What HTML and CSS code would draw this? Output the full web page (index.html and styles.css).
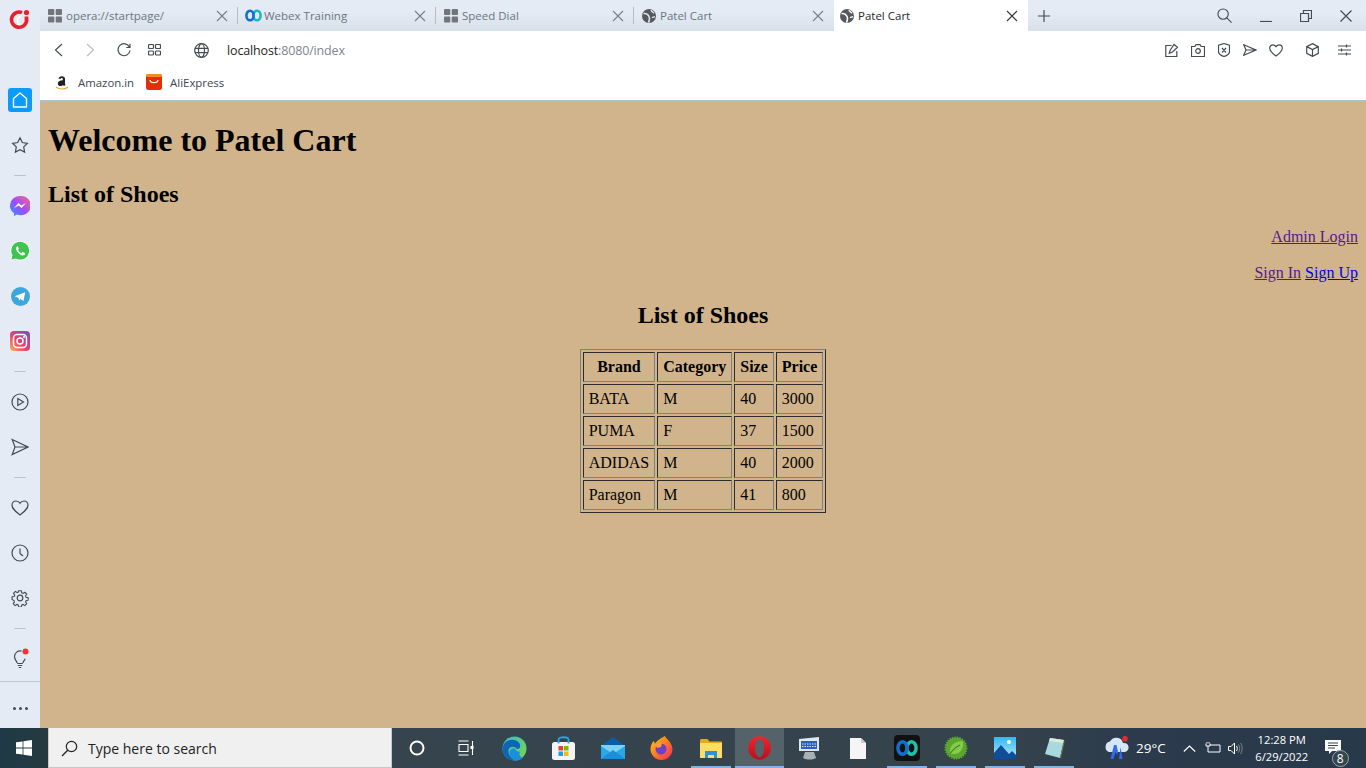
FILE: index.html
```html
<!DOCTYPE html>
<html>
<head>
    <title>Patel Cart</title>
    <link rel="stylesheet" href="styles.css">
</head>
<body>
<div class="window">
    <div class="main">
        <!-- opera sidebar -->
        <div class="sidebar">
            <div class="side-logo">
                <svg width="22" height="22" viewBox="0 0 22 22"><path d="M13 4.600A7.600 7.600 0 1 0 17.700 12" fill="none" stroke="#e8202e" stroke-width="3.600"/><path d="M11.500 8.500c-2 .6-3 2.600-3 4.600 0 2 .8 3.400 2 4" fill="none" stroke="#fff" stroke-width="1.500"/><circle cx="17.500" cy="4.500" r="2.600" fill="#e8202e"/><rect x="15.600" y="8.500" width="3.800" height="4" fill="#e8202e"/></svg>
            </div>
            <div class="side-item">
                <span class="home-btn"><svg width="18" height="18" viewBox="0 0 18 18"><path d="M2.500 16V7.500L9 2l6.500 5.500V16z" fill="none" stroke="#fff" stroke-width="1.400" stroke-linejoin="round"/></svg></span>
            </div>
            <div class="side-item"><svg class="ico" width="18" height="18" viewBox="0 0 18 18"><path d="M9 1.800l2.300 4.700 5.100.8-3.700 3.600.9 5.200L9 13.600l-4.600 2.500.9-5.200-3.700-3.600 5.100-.8z"/></svg></div>
            <div class="side-sep"></div>
            <div class="side-item"><svg width="20" height="20" viewBox="0 0 20 20"><defs><linearGradient id="msg" x1="0" y1="1" x2="1" y2="0"><stop offset="0" stop-color="#2a9cff"/><stop offset=".45" stop-color="#9a4dff"/><stop offset="1" stop-color="#ff6583"/></linearGradient></defs><path d="M10 0a10 9.600 0 0 0-6 17.200V20l3-1.600a10 9.600 0 1 0 3-18.400z" fill="url(#msg)"/><path d="M4 12l4.500-5 2.700 2.500L16 7l-4.500 5-2.700-2.500z" fill="#fff"/></svg></div>
            <div class="side-item"><svg width="20" height="20" viewBox="0 0 20 20"><path d="M.6 19.400l1.400-5A9.400 9.400 0 1 1 5.700 18z" fill="#3fc351" stroke="#fff" stroke-width="1"/><path d="M7.300 5.400c-1.200.6-1.700 2-1 3.700 1 2.300 3 4.300 5.200 5.100 1.600.5 3 0 3.500-1.300.2-.5 0-.8-.3-1l-1.700-.8c-.3-.1-.6 0-.8.3l-.6.800c-1.500-.5-2.800-1.700-3.500-3.300l.6-.7c.2-.2.2-.5.100-.8l-.7-1.700c-.1-.3-.4-.4-1-.3z" fill="#fff"/></svg></div>
            <div class="side-item"><svg width="19" height="19" viewBox="0 0 19 19"><circle cx="9.500" cy="9.500" r="9.500" fill="#3ea6de"/><path d="M3.800 9.300l10.400-4.100-1.700 8.900-3-2.100-1.500 1.500-.4-2.500z" fill="#fff"/></svg></div>
            <div class="side-item"><svg width="20" height="20" viewBox="0 0 20 20"><defs><linearGradient id="ig" x1="0" y1="1" x2="1" y2="0"><stop offset="0" stop-color="#fdb44b"/><stop offset=".45" stop-color="#e8416f"/><stop offset="1" stop-color="#6a50c8"/></linearGradient></defs><rect width="20" height="20" rx="4" fill="url(#ig)"/><rect x="3.500" y="3.500" width="13" height="13" rx="3.500" fill="none" stroke="#fff" stroke-width="1.500"/><circle cx="10" cy="10" r="3" fill="none" stroke="#fff" stroke-width="1.500"/><circle cx="14" cy="6" r="1" fill="#fff"/></svg></div>
            <div class="side-sep"></div>
            <div class="side-item"><svg class="ico" width="18" height="18" viewBox="0 0 18 18"><circle cx="9" cy="9" r="8"/><path d="M6.800 5.500L12.500 9l-5.700 3.500z"/></svg></div>
            <div class="side-item"><svg class="ico" width="18" height="18" viewBox="0 0 18 18"><path d="M1.200 1.500L17 9 1.200 16.500 4 9zM4 9h13"/></svg></div>
            <div class="side-sep"></div>
            <div class="side-item"><svg class="ico" width="18" height="16" viewBox="0 0 18 16"><path d="M9 15C4 11 1 8.500 1 5.200 1 2.800 2.800 1 5 1c1.700 0 3.100.9 4 2.300C9.900 1.900 11.300 1 13 1c2.200 0 4 1.800 4 4.200C17 8.500 14 11 9 15z"/></svg></div>
            <div class="side-item"><svg class="ico" width="18" height="18" viewBox="0 0 18 18"><circle cx="9" cy="9" r="8"/><path d="M9 4.500V9.500l3 2.500"/></svg></div>
            <div class="side-item"><svg class="ico" width="18" height="18" viewBox="0 0 18 18"><circle cx="9" cy="9" r="2.800"/><path d="M7.500 1h3l.4 2.300 1.500.7 2-1.300 2 2.100-1.300 2 .6 1.500 2.300.4v2.700l-2.300.5-.6 1.400 1.300 2-2 2.100-2-1.300-1.500.6-.4 2.300h-3l-.4-2.300-1.500-.6-2 1.300-2-2.100 1.300-2-.6-1.400L.3 10.500V7.700l2.300-.4.6-1.500-1.300-2 2-2.100 2 1.300 1.500-.7z" transform="translate(.8 .8) scale(.91)"/></svg></div>
            <div class="side-sep"></div>
            <div class="side-item">
                <svg class="ico" width="18" height="22" viewBox="0 0 18 22"><path d="M6 15c0-2-2.500-3-2.500-6.500a5.500 5.500 0 0 1 7-5.300M12 15c0-1.500 1.500-2.500 2.200-4.200M6.200 15.500h5.600M6.800 17.500h4.400M7.800 19.500h2.400"/><circle class="red-dot" cx="14.500" cy="3.500" r="3"/></svg>
            </div>
            <div class="side-more"><span></span><span></span><span></span></div>
        </div>

        <div class="browser">
            <div class="tabs">
                <div class="tab">
                    <svg class="tab-ico" width="14" height="14" viewBox="0 0 14 14"><rect width="6.300" height="6" rx="1"/><rect x="7.700" width="6.300" height="6" rx="1"/><rect y="7.500" width="6.300" height="6" rx="1"/><rect x="7.700" y="7.500" width="6.300" height="6" rx="1"/></svg>
                    <span class="tab-title">opera://startpage/</span>
                    <svg class="tab-x" width="12" height="12" viewBox="0 0 12 12"><path d="M1 1l10 10M11 1L1 11"/></svg>
                </div>
                <div class="tab tab-webex">
                    <svg width="17" height="13" viewBox="0 0 17 13"><ellipse cx="12" cy="6.500" rx="3.600" ry="4.800" fill="none" stroke="#1fb4c6" stroke-width="2.600"/><ellipse cx="5" cy="6.500" rx="3.600" ry="4.800" fill="none" stroke="#1170cf" stroke-width="2.600"/></svg>
                    <span class="tab-title">Webex Training</span>
                    <svg class="tab-x" width="12" height="12" viewBox="0 0 12 12"><path d="M1 1l10 10M11 1L1 11"/></svg>
                </div>
                <div class="tab">
                    <svg class="tab-ico" width="14" height="14" viewBox="0 0 14 14"><rect width="6.300" height="6" rx="1"/><rect x="7.700" width="6.300" height="6" rx="1"/><rect y="7.500" width="6.300" height="6" rx="1"/><rect x="7.700" y="7.500" width="6.300" height="6" rx="1"/></svg>
                    <span class="tab-title">Speed Dial</span>
                    <svg class="tab-x" width="12" height="12" viewBox="0 0 12 12"><path d="M1 1l10 10M11 1L1 11"/></svg>
                </div>
                <div class="tab tab-last">
                    <svg class="tab-ico" width="14" height="14" viewBox="0 0 14 14"><circle cx="7" cy="7" r="7"/><path class="tab-gl" d="M1.500 4.600C4 4.200 6 5.600 7 7.300s.6 3.800-.5 6.300M8.800 1.200l3.200 3M10 8.600l3-1"/></svg>
                    <span class="tab-title">Patel Cart</span>
                    <svg class="tab-x" width="12" height="12" viewBox="0 0 12 12"><path d="M1 1l10 10M11 1L1 11"/></svg>
                </div>
                <div class="tab tab-active">
                    <svg class="tab-ico" width="14" height="14" viewBox="0 0 14 14"><circle cx="7" cy="7" r="7"/><path class="tab-gl" d="M1.500 4.600C4 4.200 6 5.600 7 7.300s.6 3.800-.5 6.300M8.800 1.200l3.200 3M10 8.600l3-1"/></svg>
                    <span class="tab-title">Patel Cart</span>
                    <svg class="tab-x" width="12" height="12" viewBox="0 0 12 12"><path d="M1 1l10 10M11 1L1 11"/></svg>
                </div>
                <svg class="tab-plus ico" width="12" height="12" viewBox="0 0 12 12"><path d="M6 0v12M0 6h12"/></svg>
                <div class="win-btns">
                    <svg class="ico" width="15" height="15" viewBox="0 0 16 16"><circle cx="6.500" cy="6.500" r="5.500"/><path d="M10.500 10.500L15.500 15.500"/></svg>
                    <svg class="ico" width="12" height="12" viewBox="0 0 12 12"><path d="M0 11.500h12"/></svg>
                    <svg class="ico" width="12" height="12" viewBox="0 0 12 12"><path d="M.5 3.500h8v8h-8zM3.500 3.500v-3h8v8h-3"/></svg>
                    <svg class="ico" width="12" height="12" viewBox="0 0 12 12"><path d="M.5.500l11 11M11.500.500l-11 11"/></svg>
                </div>
            </div>

            <div class="toolbar">
                <svg class="ico" width="9" height="14" viewBox="0 0 9 14"><path d="M8 1L1.500 7 8 13"/></svg>
                <svg class="ico ico-off nav-fwd" width="9" height="14" viewBox="0 0 9 14"><path d="M1 1l6.500 6L1 13"/></svg>
                <svg class="ico nav-reload" width="14" height="14" viewBox="0 0 14 14"><path d="M12.500 4.200A6 6 0 1 0 13 7.500M13 .8v3.700H9.300"/></svg>
                <svg class="ico nav-grid" width="13" height="12" viewBox="0 0 13 12"><rect x=".5" y=".5" width="5" height="4" rx="1"/><rect x="7.500" y=".5" width="5" height="4" rx="1"/><rect x=".5" y="7" width="5" height="4" rx="1"/><rect x="7.500" y="7" width="5" height="4" rx="1"/></svg>
                <svg class="ico globe" width="15" height="15" viewBox="0 0 15 15"><circle cx="7.500" cy="7.500" r="6.800"/><ellipse cx="7.500" cy="7.500" rx="3" ry="6.800"/><path d="M1 5.300h13M1 9.700h13"/></svg>
                <div class="url">localhost<span class="url-dim">:8080/index</span></div>
                <div class="tool-right">
                    <svg class="ico" width="14" height="14" viewBox="0 0 14 14"><path d="M6.500 2.500H.8v11h11V8M5 7.500L9 1.500l3.500 2.800L7.500 9l-3.200 1.300z"/></svg>
                    <svg class="ico" width="14" height="13" viewBox="0 0 14 13"><path d="M.5 2.500h3.300L5 .7h4l1.200 1.800h3.300v10H.5z"/><circle cx="7" cy="7" r="2.300"/></svg>
                    <svg class="ico" width="12" height="14" viewBox="0 0 12 14"><path d="M6 .5l5.500 1.800v6.200c0 2.500-3 4.200-5.500 5-2.500-.8-5.500-2.500-5.500-5V2.300zM4 5l4 4.500M8 5L4 9.500"/></svg>
                    <svg class="ico" width="14" height="12" viewBox="0 0 14 12"><path d="M.8.800L13 6 .8 11.200 3 6zM3 6h10"/></svg>
                    <svg class="ico" width="14" height="13" viewBox="0 0 14 13"><path d="M7 12C3 9 .7 7 .7 4.200.7 2.200 2.200.8 3.900.8 5.200.8 6.300 1.500 7 2.600 7.700 1.500 8.800.8 10.100.8c1.700 0 3.200 1.400 3.200 3.400C13.300 7 11 9 7 12z"/></svg>
                    <svg class="ico ico-gap" width="13" height="14" viewBox="0 0 13 14"><path d="M6.500.6l5.800 3v6.800l-5.800 3-5.800-3V3.600zM.7 3.600l5.800 3 5.800-3M6.500 6.600v6.800"/></svg>
                    <svg class="ico ico-gap2" width="13" height="12" viewBox="0 0 13 12"><path d="M0 2h13M0 6h13M0 10h13M8.500.5v3M3.500 4.500v3M8.500 8.500v3"/></svg>
                </div>
            </div>

            <div class="bookmarks">
                <div class="bookmark">
                    <svg width="14" height="15" viewBox="0 0 14 15"><path d="M3.500 3.700c.2-1.600 1.600-2.500 3.300-2.500 2 0 3.200 1 3.200 2.600v4.700c0 .6.300.9.600 1.200L9 11c-.5-.4-.7-.7-.9-1-.8.800-1.500 1.100-2.600 1.100-1.500 0-2.700-1-2.700-2.600 0-2.100 1.900-3 5-3.200v-1.200c0-.7-.4-1.200-1.100-1.200-.6 0-1.100.3-1.200 1z" fill="#222"/><path d="M1 12c3.500 2.300 8.500 2.300 12 .2" fill="none" stroke="#f5a623" stroke-width="1.200"/></svg>
                    <span>Amazon.in</span>
                </div>
                <div class="bookmark bookmark-ali">
                    <svg width="16" height="16" viewBox="0 0 16 16"><rect width="16" height="16" rx="2.500" fill="#e62e04"/><rect width="16" height="3" rx="1.500" fill="#f58a1f"/><path d="M4 6c.5 3.500 7.500 3.500 8 0" fill="none" stroke="#fff" stroke-width="1.300"/></svg>
                    <span>AliExpress</span>
                </div>
            </div>

            <div class="page">
                <h1>Welcome to Patel Cart</h1>
                <h2>List of Shoes</h2>
                <p class="links"><a class="seen" href="#">Admin Login</a></p>
                <p class="links"><a class="seen" href="#">Sign In</a> <a href="#">Sign Up</a></p>
                <h2 class="center">List of Shoes</h2>
                <table class="shoes">
                    <tr><th>Brand</th><th>Category</th><th>Size</th><th>Price</th></tr>
                    <tr><td>BATA</td><td>M</td><td>40</td><td>3000</td></tr>
                    <tr><td>PUMA</td><td>F</td><td>37</td><td>1500</td></tr>
                    <tr><td>ADIDAS</td><td>M</td><td>40</td><td>2000</td></tr>
                    <tr><td>Paragon</td><td>M</td><td>41</td><td>800</td></tr>
                </table>
            </div>
        </div>
    </div>

    <!-- windows taskbar -->
    <div class="taskbar">
        <div class="start">
            <svg width="16" height="16" viewBox="0 0 16 16"><path d="M0 2.300l6.600-.9v6.200H0zM7.400 1.300L16 0v7.600H7.400zM0 8.400h6.600v6.200L0 13.700zM7.400 8.400H16V16l-8.600-1.300z" fill="#fff"/></svg>
        </div>
        <div class="search">
            <svg width="17" height="17" viewBox="0 0 17 17"><circle cx="10.500" cy="6.500" r="5.200" fill="none" stroke="#222" stroke-width="1.200"/><path d="M6.700 10.300L1 16" stroke="#222" stroke-width="1.300"/></svg>
            <span>Type here to search</span>
        </div>
        <div class="tb-icons">
            <div class="tb-item"><svg width="16" height="16" viewBox="0 0 16 16"><circle cx="8" cy="8" r="6.500" fill="none" stroke="#fff" stroke-width="2"/></svg></div>
            <div class="tb-item"><svg width="16" height="16" viewBox="0 0 16 16"><path d="M.5 1h10M.5 15h10M1 4.500h9v7H1zM14.500 1v14" fill="none" stroke="#fff" stroke-width="1.100"/><rect x="12.500" y="6" width="3" height="3" fill="#fff"/></svg></div>
            <div class="tb-item"><svg width="25" height="25" viewBox="0 0 25 25"><defs><linearGradient id="edge1" x1="0" y1="0" x2="1" y2="1"><stop offset="0" stop-color="#35c1c9"/><stop offset="1" stop-color="#7ed44a"/></linearGradient></defs><circle cx="12.500" cy="12.500" r="12" fill="url(#edge1)"/><path d="M.5 12.500C1.500 5 8 3 12 4c5 1 7.500 5 5.500 8-1 1.500-3.500 1-4-.5C11 10 7 11 6.500 14c-.5 4 3 9 7 10.500C6.500 25.500.5 19.500.5 12.500z" fill="#0c66b5"/><path d="M13 24.500c-3-1-6-5-5.500-9 .5-2.500 3.500-4 5.500-3 .5 2 2 3.500 5 3.200-1.500 3 .5 5.500 3 6-2 2-5 3-8 2.800z" fill="#1b8fdc"/></svg></div>
            <div class="tb-item"><svg width="23" height="24" viewBox="0 0 23 24"><rect y="6" width="23" height="18" rx="2.500" fill="#f4f4f4"/><path d="M6.500 7.500V3.500c0-3 10-3 10 0v4" fill="none" stroke="#26a7e0" stroke-width="1.800"/><rect x="6.500" y="10" width="4.500" height="4.500" fill="#e8432a"/><rect x="12" y="10" width="4.500" height="4.500" fill="#7fb900"/><rect x="6.500" y="15.500" width="4.500" height="4.500" fill="#0ea5e9"/><rect x="12" y="15.500" width="4.500" height="4.500" fill="#fdb900"/></svg></div>
            <div class="tb-item"><svg width="24" height="22" viewBox="0 0 24 22"><path d="M0 9L12 0l12 9v13H0z" fill="#0a5ea8"/><path d="M0 9h24v13H0z" fill="#28a8ea"/><path d="M0 9l12 8 12-8v-1H0z" fill="#7dd3f7"/><path d="M0 22l12-9 12 9z" fill="#1b8fdc"/></svg></div>
            <div class="tb-item"><svg width="23" height="24" viewBox="0 0 23 24"><defs><linearGradient id="ff" x1="0" y1="0" x2="1" y2="1"><stop offset="0" stop-color="#ffcb1f"/><stop offset=".5" stop-color="#ff7a20"/><stop offset="1" stop-color="#f0276c"/></linearGradient></defs><path d="M15 0c1 3 7 6 7.500 13a11 11 0 0 1-22 0C.5 9 2.500 6 4 5l1 3c1-3 5-5 10-8z" fill="url(#ff)"/><circle cx="11" cy="13" r="5.500" fill="#6e3fc9"/><path d="M5 8c2-2 5-2 7-1l-1 4-4 1z" fill="#ff9d2a"/></svg></div>
            <div class="tb-item tb-run"><svg width="22" height="19" viewBox="0 0 22 19"><path d="M0 1.500C0 .700.700 0 1.500 0h6l2 2.500H22V19H0z" fill="#e5a81f"/><rect y="4" width="22" height="15" fill="#fddc68"/><path d="M5 12h12v7H14v-3H8v3H5z" fill="#2f8fdc"/></svg></div>
            <div class="tb-item tb-active"><svg width="23" height="24" viewBox="0 0 23 24"><defs><linearGradient id="op" x1="0" y1="0" x2="0" y2="1"><stop offset="0" stop-color="#f3242f"/><stop offset="1" stop-color="#b90f1c"/></linearGradient></defs><ellipse cx="11.500" cy="12" rx="11.300" ry="11.800" fill="url(#op)"/><ellipse cx="11.500" cy="12" rx="4.600" ry="9.200" fill="#566269"/></svg></div>
            <div class="tb-item"><svg width="24" height="24" viewBox="0 0 24 24"><path d="M2 3l20-2v14L2 15z" fill="#dfe7ef"/><rect x="4" y="5" width="16" height="8" fill="#2a5fc4"/><path d="M5 8h14M5 10.500h14" stroke="#cfe0ff" stroke-width="1" stroke-dasharray="1.500 1"/><path d="M8 16h9l2 6c-4 2-9 2-13 0z" fill="#a9b0b6"/></svg></div>
            <div class="tb-item"><svg width="16" height="21" viewBox="0 0 16 21"><path d="M0 0h11l5 5v16H0z" fill="#f5f5f5"/><path d="M11 0l5 5h-5z" fill="#c9c9c9"/></svg></div>
            <div class="tb-item tb-run"><svg width="26" height="26" viewBox="0 0 26 26"><rect width="26" height="26" rx="4" fill="#111"/><ellipse cx="17.500" cy="13" rx="4.600" ry="6.200" fill="none" stroke="#1fc0a8" stroke-width="3.400"/><ellipse cx="8.500" cy="13" rx="4.600" ry="6.200" fill="none" stroke="#1170cf" stroke-width="3.400"/></svg></div>
            <div class="tb-item tb-run"><svg width="24" height="24" viewBox="0 0 24 24"><circle cx="12" cy="12" r="10.500" fill="#5aa62f" stroke="#5aa62f" stroke-width="2" stroke-dasharray="1.500 1"/><path d="M6 18C5 10 10 5 19 5c1 8-3 13-9 13-1.500 0-3 0-4 0z" fill="#86cc4c"/><path d="M6 18c3-5 6-7 10-9" stroke="#3f8a22" stroke-width="1.200" fill="none"/></svg></div>
            <div class="tb-item tb-run"><svg width="22" height="22" viewBox="0 0 22 22"><defs><linearGradient id="ph" x1="0" y1="0" x2="0" y2="1"><stop offset="0" stop-color="#30b8f0"/><stop offset="1" stop-color="#bde6fb"/></linearGradient></defs><rect width="22" height="22" fill="url(#ph)"/><circle cx="15" cy="5" r="2" fill="#fff"/><path d="M0 16l7-8 8 9 3-3 4 4v4H0z" fill="#0f4c9a"/></svg></div>
            <div class="tb-item tb-run"><svg width="22" height="22" viewBox="0 0 22 22"><path d="M7 1l14 2-4 18L2 17z" fill="#a8d8e0"/><path d="M7 1l14 2-.5 3L6 4z" fill="#dfe9d9"/><path d="M17 21l4-18 .5 2-3.500 16z" fill="#6d7a4a"/></svg></div>
        </div>
        <div class="tray">
            <svg class="tray-weather" width="26" height="24" viewBox="0 0 26 24"><path d="M5 16a5.500 5.500 0 0 1 1-10.500 7 7 0 0 1 13 1.500 4.500 4.500 0 0 1 2 9z" fill="#d7e6f7"/><path d="M10 9l-3.500 14h3l2-7 1.500 3 1-3-1.500-7zM16.500 11l-1.500 12h3.500z" fill="#2f6bf0"/><circle cx="21" cy="2.800" r="2.800" fill="#e22d2d"/></svg>
            <span class="temp">29°C</span>
            <svg class="tray-up" width="13" height="7" viewBox="0 0 13 7"><path d="M.8 6.500L6.500 1l5.700 5.500" fill="none" stroke="#fff" stroke-width="1.100"/></svg>
            <svg class="tray-bat" width="16" height="12" viewBox="0 0 16 12"><path d="M5 3h10v7H3V7M1 1.500V4h4V1.500M2 1.500V0M4 1.500V0M3 4v3" fill="none" stroke="#fff" stroke-width="1"/></svg>
            <svg class="tray-vol" width="16" height="13" viewBox="0 0 16 13"><path d="M.5 4.500h2.500L6.500 1v11L3 8.500H.5z" fill="none" stroke="#fff" stroke-width="1"/><path d="M8.500 4c1 1.500 1 3.500 0 5" fill="none" stroke="#fff" stroke-width="1"/><path d="M10.500 2.500c1.600 2.500 1.600 5.500 0 8M12.500 1c2.200 3.400 2.200 7.600 0 11" fill="none" stroke="#7d868c" stroke-width="1"/></svg>
            <div class="clock"><div>12:28 PM</div><div>6/29/2022</div></div>
            <div class="notif">
                <svg width="16" height="14" viewBox="0 0 16 14"><path d="M0 0h16v11H7l-3 3v-3H0z" fill="#fff"/><path d="M3 3h10M3 5.500h10M3 8h7" stroke="#36454d" stroke-width="1"/></svg>
                <span class="notif-count">8</span>
            </div>
        </div>
    </div>
</div>
</body>
</html>
```

FILE: styles.css
```css
html, body {
    margin: 0;
    padding: 0;
}
.window {
    display: flex;
    flex-direction: column;
    width: 1366px;
    height: 768px;
    overflow: hidden;
    font-family: "Open Sans", sans-serif;
}
.main {
    display: flex;
    height: 728px;
}
.ico {
    fill: none;
    stroke: #444b52;
    stroke-width: 1.2;
    flex: none;
}
.ico-off {
    stroke: #b9bec3;
}

/* sidebar */
.sidebar {
    width: 40px;
    flex: none;
    display: flex;
    flex-direction: column;
    background-color: #e4ebf4;
}
.side-logo {
    height: 78px;
    display: flex;
    justify-content: center;
    padding-top: 8px;
    box-sizing: border-box;
}
.side-item {
    height: 45px;
    display: flex;
    align-items: center;
    justify-content: center;
}
.side-sep {
    height: 16px;
    display: flex;
    align-items: center;
    justify-content: center;
}
.side-sep::before {
    content: "";
    width: 12px;
    height: 1px;
    background-color: #b8c3cc;
}
.home-btn {
    width: 24px;
    height: 24px;
    border-radius: 3px;
    background-color: #0a9bfd;
    display: flex;
    align-items: center;
    justify-content: center;
}
.red-dot {
    fill: #f8302f;
    stroke: none;
}
.side-more {
    height: 47px;
    display: flex;
    align-items: center;
    justify-content: center;
    gap: 3px;
    padding-top: 6px;
    border-top: 1px solid #bcc6ce;
    box-sizing: border-box;
}
.side-more span {
    width: 3px;
    height: 3px;
    border-radius: 50%;
    background-color: #444b52;
}

/* browser chrome */
.browser {
    flex: 1;
    min-width: 0;
    display: flex;
    flex-direction: column;
}
.tabs {
    height: 31px;
    flex: none;
    display: flex;
    align-items: center;
    background: linear-gradient(#e4ebf4 40%, #d8e0ea);
}
.tab {
    width: 198px;
    height: 31px;
    box-sizing: border-box;
    padding: 0 10px 0 8px;
    display: flex;
    align-items: center;
    gap: 4px;
    position: relative;
    font-size: 11.500px;
    color: #6b7680;
}
.tab::after {
    content: "";
    position: absolute;
    right: 0;
    top: 7px;
    height: 17px;
    width: 1px;
    background-color: #b4bdc6;
}
.tab-webex {
    padding-left: 7px;
    gap: 2px;
}
.tab-last {
    width: 200px;
}
.tab-last::after,
.tab-active::after {
    display: none;
}
.tab-active {
    width: 194px;
    background-color: #fff;
    color: #26292c;
    padding-left: 6px;
}
.tab-ico {
    fill: #70767c;
    flex: none;
}
.tab-last .tab-ico,
.tab-active .tab-ico {
    fill: #54595e;
}
.tab-gl {
    fill: none;
    stroke: #e0e7f0;
    stroke-width: 1.500;
}
.tab-active .tab-gl {
    stroke: #fff;
}
.tab-title {
    flex: 1;
    white-space: nowrap;
}
.tab-x {
    fill: none;
    stroke: #777e85;
    stroke-width: 1.1;
    flex: none;
}
.tab-active .tab-x {
    stroke: #33383d;
}
.tab-plus {
    margin-left: 10px;
}
.win-btns {
    margin-left: auto;
    display: flex;
    align-items: center;
    padding-right: 14px;
    gap: 28px;
}
.toolbar {
    height: 38px;
    flex: none;
    background-color: #fff;
    display: flex;
    align-items: center;
    padding: 0 15px 0 14px;
}
.nav-fwd {
    margin-left: 23px;
}
.nav-reload {
    margin-left: 22px;
}
.nav-grid {
    margin-left: 17px;
}
.globe {
    margin-left: 33px;
}
.url {
    margin-left: 18px;
    font-size: 12.500px;
    color: #1c1f22;
    letter-spacing: -0.15px;
}
.url-dim {
    color: #7c858d;
}
.tool-right {
    margin-left: auto;
    display: flex;
    align-items: center;
    gap: 12px;
}
.tool-right svg:nth-child(3),
.tool-right svg:nth-child(4) {
    margin-left: 1px;
}
.ico-gap {
    margin-left: 11px;
}
.ico-gap2 {
    margin-left: 7px;
}
.bookmarks {
    height: 31px;
    flex: none;
    box-sizing: border-box;
    padding: 0 0 5px 15px;
    background-color: #fff;
    display: flex;
    align-items: center;
    font-size: 11.400px;
    color: #3d4650;
}
.bookmark {
    display: flex;
    align-items: center;
    gap: 9px;
}
.bookmark-ali {
    margin-left: 12px;
    gap: 8px;
}

/* the page itself */
.page {
    flex: 1;
    background-color: #d2b48c;
    border-top: 2px solid #b2bfc8;
    padding: 0 8px;
    font-family: "Liberation Serif", serif;
    font-size: 16px;
    color: #000;
    overflow: hidden;
}
.page h1 {
    font-size: 32px;
    margin: 20px 0 22px;
}
.page h2 {
    font-size: 24px;
    margin: 20px 0;
}
.links {
    text-align: right;
    margin: 18px 0;
}
.page a {
    color: #0000ee;
}
.page a.seen {
    color: #551a8b;
}
.page h2.center {
    text-align: center;
    margin: 20px 0;
}
.shoes {
    margin: 0 auto;
    border: 1px outset gray;
    border-spacing: 2px;
}
.shoes th,
.shoes td {
    border: 1px inset gray;
    padding: 5px;
}

/* taskbar */
.taskbar {
    height: 40px;
    flex: none;
    display: flex;
    background: linear-gradient(90deg, #1e3a46 0, #24393f 48px, #36454d 392px, #35434c 1000px, #2b3a4c 1150px, #28394a 100%);
    color: #fff;
}
.start {
    width: 48px;
    display: flex;
    align-items: center;
    justify-content: center;
}
.search {
    width: 344px;
    box-sizing: border-box;
    background-color: #f0f0f0;
    border: 1px solid #c8c8c8;
    border-top: none;
    display: flex;
    align-items: center;
    padding: 1px 0 0 12px;
    gap: 10px;
    font-size: 14px;
    color: #222;
}
.tb-icons {
    display: flex;
}
.tb-item {
    width: 49px;
    height: 40px;
    display: flex;
    align-items: center;
    justify-content: center;
}
.tb-run {
    background: linear-gradient(#7db6e6, #7db6e6) center bottom / 40px 2px no-repeat;
}
.tb-active {
    background: linear-gradient(#7db6e6, #7db6e6) center bottom / 100% 2px no-repeat, #566269;
}
.tray {
    flex: 1;
    display: flex;
    align-items: center;
    font-size: 13px;
}
.tray-weather {
    margin-left: 26px;
}
.temp {
    margin-left: 6px;
    font-size: 13.500px;
}
.tray-up {
    margin-left: 17px;
}
.tray-bat {
    margin-left: 9px;
}
.tray-vol {
    margin-left: 7px;
}
.clock {
    margin-left: 7px;
    width: 62px;
    text-align: center;
    font-size: 11.200px;
    line-height: 17px;
}
.notif {
    margin-left: 12px;
    position: relative;
    display: flex;
    padding-bottom: 2px;
}
.notif-count {
    position: absolute;
    left: 7px;
    top: 10px;
    width: 15px;
    height: 15px;
    line-height: 15px;
    text-align: center;
    border-radius: 50%;
    background-color: #36454d;
    border: 1px solid #9aa3a9;
    font-size: 12px;
}
```
